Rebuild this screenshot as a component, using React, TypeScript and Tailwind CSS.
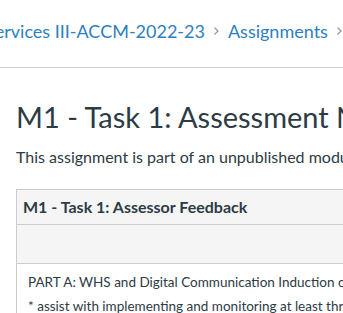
import React from 'react';

const Chevron = () => (
  <svg width="7" height="10" viewBox="0 0 7 10" className="shrink-0">
    <path d="M1.5 1.5 L5 5 L1.5 8.5" fill="none" stroke="#8b969e" strokeWidth="1.2" />
  </svg>
);

export default function App() {
  return (
    <div className="w-[343px] h-[313px] overflow-hidden bg-white font-['Lato',sans-serif] text-[#2d3b45]">
      {/* Breadcrumbs */}
      <nav className="h-[68px] border-b border-[#c7cdd1] pt-[19px]">
        <div className="flex items-center gap-[8px] whitespace-nowrap ml-[-15px] text-[18px] leading-[24px] text-[#2d7fc0]">
          <span>Services III-ACCM-2022-23</span>
          <Chevron />
          <span>Assignments</span>
          <Chevron />
          <span>M1 - Task 1</span>
        </div>
      </nav>

      {/* Content */}
      <main className="pl-[16px] whitespace-nowrap">
        <h1 className="pt-[29px] text-[29px] leading-[40px] font-normal">
          M1 - Task 1: Assessment Notice
        </h1>
        <p className="mt-[10px] text-[16px] leading-[20px]">
          This assignment is part of an unpublished module and is not visible to students.
        </p>

        <table className="mt-[22px] border-collapse border border-[#c7cdd1] w-[600px] text-[13.5px]">
          <tbody>
            <tr className="bg-[#f5f5f5] h-[35px] border-b border-[#c7cdd1]">
              <th className="text-left font-bold text-[16px] px-[6px]">M1 - Task 1: Assessor Feedback</th>
            </tr>
            <tr className="bg-[#f5f5f5] h-[39px] border-b border-[#c7cdd1]">
              <td></td>
            </tr>
            <tr>
              <td className="px-[11px] pt-[6px] leading-[24px]">
                <div>PART A: WHS and Digital Communication Induction checklist</div>
                <div>* assist with implementing and monitoring at least three</div>
              </td>
            </tr>
          </tbody>
        </table>
      </main>
    </div>
  );
}
